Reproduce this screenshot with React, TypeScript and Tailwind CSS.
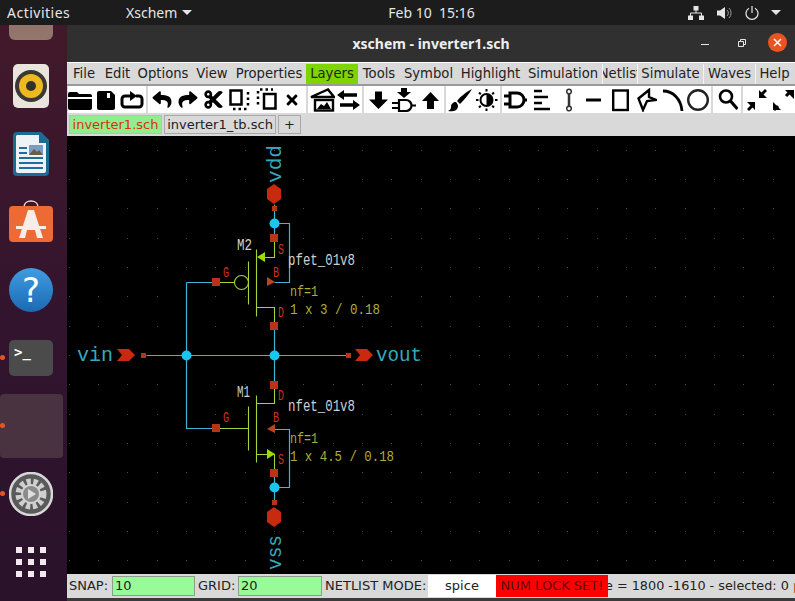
import * as React from 'react';
import { FaCut, FaReply, FaShare, FaTimes } from 'react-icons/fa';

const menus = [
    { label: 'File', w: 'w-[34px]' },
    { label: 'Edit', w: 'w-[33px]' },
    { label: 'Options', w: 'w-[58px]' },
    { label: 'View', w: 'w-[40px]' },
    { label: 'Properties', w: 'w-[74px]' },
    { label: 'Layers', w: 'w-[52px]', active: true },
    { label: 'Tools', w: 'w-[42px]' },
    { label: 'Symbol', w: 'w-[57px]' },
    { label: 'Highlight', w: 'w-[67px]' },
    { label: 'Simulation', w: 'w-[78px]' },
    { label: 'Netlist', w: 'w-[35px]', raised: true },
    { label: 'Simulate', w: 'w-[66px]', raised: true },
    { label: 'Waves', w: 'w-[52px]', raised: true },
    { label: 'Help', w: 'w-[38px]', raised: true },
];

const Ic: React.FunctionComponent<{ w: number; className?: string; children: React.ReactNode }> = ({ w, className, children }) => (
    <svg width={w} height={24} viewBox={`0 0 ${w} 24`} className={`shrink-0 ${className || ''}`}>
        {children}
    </svg>
);

const Group: React.FunctionComponent<{ className: string; children: React.ReactNode }> = ({ className, children }) => (
    <div className={`flex items-center bg-white overflow-hidden ${className}`}>{children}</div>
);

const Toolbar = () => (
    <div className="flex h-[27px] shrink-0 gap-[2px] pl-[1px] bg-[#d9d9d9]">
        <Group className="w-[78px]">
            <Ic w={24}>
                <path d="M0 6a2 2 0 0 1 2-2h7l2 2h11a2 2 0 0 1 2 2v1H0zM0 11h24v9a2 2 0 0 1-2 2H2a2 2 0 0 1-2-2z" />
            </Ic>
            <Ic w={20} className="ml-[4px]">
                <path d="M3 3h12l4 4v13a2 2 0 0 1-2 2H3a2 2 0 0 1-2-2V5a2 2 0 0 1 2-2z" />
                <rect x="11" y="5" width="3" height="5" fill="#fff" />
            </Ic>
            <Ic w={24} className="ml-[4px]">
                <path d="M10 8H5a3 3 0 0 0-3 3v5a3 3 0 0 0 3 3h14a3 3 0 0 0 3-3v-5a3 3 0 0 0-3-3h-3" fill="none" stroke="#000" strokeWidth="3" />
                <path d="M10 3l7 5-7 5z" />
            </Ic>
        </Group>
        <Group className="w-[158px]">
            <FaReply className="ml-[3px] w-[22px] h-[19px] shrink-0" />
            <FaShare className="ml-[4px] w-[22px] h-[19px] shrink-0" />
            <FaCut className="ml-[4px] w-[21px] h-[21px] shrink-0" />
            <Ic w={21} className="ml-[5px]">
                <rect x="1.500" y="2.500" width="11" height="14" fill="none" stroke="#000" strokeWidth="2.500" />
                <path d="M19 4v14M4 21h14" fill="none" stroke="#000" strokeWidth="2.500" strokeDasharray="2.500 3" />
            </Ic>
            <Ic w={21} className="ml-[6px]">
                <rect x="8" y="6" width="11.500" height="14.500" fill="none" stroke="#000" strokeWidth="2.500" />
                <path d="M2 3v14M4 1.500h13" fill="none" stroke="#000" strokeWidth="2.500" strokeDasharray="2.500 3" />
            </Ic>
            <FaTimes className="ml-[8px] w-[14px] h-[16px] shrink-0" />
        </Group>
        <Group className="w-[54px]">
            <Ic w={25} className="ml-[2px]">
                <path d="M1 9L18 1.500 24 9z" fill="none" stroke="#000" strokeWidth="2.400" />
                <rect x="5" y="12" width="18" height="10.500" fill="none" stroke="#000" strokeWidth="2.400" />
                <path d="M7 21l4-5 3 2 3-4 4 7z" />
            </Ic>
            <Ic w={23} className="ml-[2px]">
                <path d="M7 7h13M3 17h13" fill="none" stroke="#000" strokeWidth="3.500" />
                <path d="M0 7l7-5v10zM23 17l-7-5v10z" />
            </Ic>
        </Group>
        <Group className="w-[80px]">
            <Ic w={19} className="ml-[5px]">
                <path d="M6 3.500h7v8h6l-9.500 9.500L0 11.500h6z" />
            </Ic>
            <Ic w={24} className="ml-[4px]">
                <path d="M9 0h6v4h4l-7 6-7-6h4z" />
                <path d="M7 12h7a5.500 5.500 0 0 1 0 11H7zM0 15h7M0 20h7M19 17.500h5" fill="none" stroke="#000" strokeWidth="2.200" />
            </Ic>
            <Ic w={19} className="ml-[5px]">
                <path d="M9.500 4l8.500 9h-5v8H6v-8H1z" />
            </Ic>
        </Group>
        <Group className="w-[54px]">
            <Ic w={24} className="ml-[2px]">
                <path d="M24 1C18 4 12 9 9 13l3 3C16 12 21 6 24 1zM8 14c-3 0-5 2-5 5 0 2-1 3-3 4 4 1 10 0 10-5 0-1-1-3-2-4z" />
            </Ic>
            <Ic w={23} className="ml-[3px]">
                <circle cx="11.500" cy="12" r="6" fill="#fff" stroke="#000" strokeWidth="2" />
                <path d="M11.500 6a6 6 0 0 1 0 12z" />
                <path d="M11.500 1v2.500M11.500 20.500V23M1 12h2.500M20 12h2.500M4 4.500l1.800 1.800M19 4.500l-1.800 1.800M4 19.500l1.800-1.800M19 19.500l-1.800-1.800" stroke="#000" strokeWidth="2" />
            </Ic>
        </Group>
        <Group className="w-[209px]">
            <Ic w={23} className="ml-[2px]">
                <path d="M6 5h7a7 7 0 0 1 0 14H6zM0 8h6M0 16h6M19 12h4" fill="none" stroke="#000" strokeWidth="3" />
            </Ic>
            <Ic w={17} className="ml-[7px]">
                <path d="M0 3h8M0 9h14M0 15h8M0 21h16" stroke="#000" strokeWidth="2.500" />
            </Ic>
            <Ic w={8} className="ml-[14px]">
                <path d="M4 5v14" stroke="#333" strokeWidth="2.500" />
                <circle cx="4" cy="3.500" r="2.300" fill="#fff" stroke="#333" strokeWidth="1.500" />
                <circle cx="4" cy="20.500" r="2.300" fill="#fff" stroke="#333" strokeWidth="1.500" />
            </Ic>
            <Ic w={15} className="ml-[13px]">
                <path d="M0 12h15" stroke="#000" strokeWidth="3" />
            </Ic>
            <Ic w={17} className="ml-[11px]">
                <rect x="1.200" y="2.500" width="14.600" height="19.500" fill="none" stroke="#000" strokeWidth="2.400" />
            </Ic>
            <Ic w={20} className="ml-[8px]">
                <path d="M12 2L1.500 10.500 6 22l4-9 9-1-7-3z" fill="none" stroke="#000" strokeWidth="2.400" />
            </Ic>
            <Ic w={21} className="ml-[6px]">
                <path d="M0 3c10 0 18 8 19 20" fill="none" stroke="#000" strokeWidth="2.800" />
            </Ic>
            <Ic w={22} className="ml-[3px]">
                <circle cx="11" cy="12" r="9.800" fill="none" stroke="#222" strokeWidth="2.400" />
            </Ic>
        </Group>
        <Group className="w-[28px]">
            <Ic w={20} className="ml-[5px]">
                <circle cx="8" cy="8.500" r="6" fill="none" stroke="#000" strokeWidth="2.600" />
                <path d="M12.500 13l7 8" stroke="#000" strokeWidth="3.200" />
            </Ic>
        </Group>
        <Group className="flex-1">
            <Ic w={20} className="ml-[4px]">
                <path d="M19 2l-4 4" stroke="#000" strokeWidth="3" />
                <path d="M12 2v8h8zM1 22l4-4" />
                <path d="M1 22l4-4" stroke="#000" strokeWidth="3" />
                <path d="M0 14h8v8z" />
            </Ic>
            <Ic w={23} className="ml-[5px]">
                <path d="M14 8l5-5M2 22l4-4" stroke="#000" strokeWidth="3" />
                <path d="M13 2h9v9zM1 14l8 8H1z" />
            </Ic>
        </Group>
    </div>
);

// grid dots of the schematic sit every 29.33px, lined up on the wires
const gridDots: { x: number; y: number }[] = [];
for (let i = -7; i < 19; i++) {
    for (let j = -8; j < 9; j++) {
        gridDots.push({ x: Math.round(274 + i * 29.33), y: Math.round(355 + j * 29.33) });
    }
}

const WIRE = '#3fb4d6';
const DOT = '#18c6f0';
const SYM = '#a4d43a';
const PIN = '#b83418';
const RED = '#d2301c';
const mono = '"Liberation Mono", "DejaVu Sans Mono", monospace';

const pinLabels = [
    { t: 'S', x: 278, y: 254 },
    { t: 'G', x: 223, y: 277 },
    { t: 'B', x: 273, y: 277 },
    { t: 'D', x: 278, y: 317 },
    { t: 'D', x: 278, y: 400 },
    { t: 'G', x: 223, y: 422 },
    { t: 'B', x: 273, y: 422 },
    { t: 'S', x: 278, y: 464 },
];

const Schematic = () => (
    <svg viewBox="67 136 728 438" className="block w-full h-full">
        {gridDots.map((d) => (
            <rect key={`${d.x}-${d.y}`} x={d.x} y={d.y} width="1" height="1" fill="#4a4a4a" />
        ))}
        <g fill="none" stroke={WIRE} strokeWidth="1.200" transform="translate(.5 .5)">
            <path d="M274 204V238M274 223H289V282H274" />
            <path d="M274 326V385M146 355H348M186 282V428H216M186 282H216" />
            <path d="M274 429H289V487H274M274 473V502" />
        </g>
        <g fill="none" stroke={SYM} strokeWidth="1.100" transform="translate(.5 .5)">
            <path d="M274 238V257H258M256 249V316M248 261V304M256 307H274V326M216 282H234" />
            <circle cx="241" cy="282" r="7" />
            <path d="M274 385V403H256M256 395V462M248 406V450M216 428H248M256 454H274V473" />
        </g>
        <path d="M257 257l8-5v10z" fill="#9bdc00" />
        <path d="M275 454l-8-5v10z" fill="#9bdc00" />
        <path d="M275 282l-8-5v9z" fill="#b8451f" />
        <path d="M267 429l8-5v9z" fill="#b8451f" />
        {[
            [274, 223],
            [186, 355],
            [274, 355],
            [274, 487],
        ].map(([x, y]) => (
            <circle key={`${x}-${y}`} cx={x + 0.5} cy={y + 0.5} r="5" fill={DOT} />
        ))}
        <g fill={PIN}>
            {[
                [274, 238],
                [216, 282],
                [274, 326],
                [274, 385],
                [216, 428],
                [274, 473],
            ].map(([x, y]) => (
                <rect key={`${x}-${y}`} x={x - 4} y={y - 4} width="8" height="8" />
            ))}
            {[
                [274, 208],
                [143, 355],
                [348, 355],
                [274, 502],
            ].map(([x, y]) => (
                <rect key={`${x}-${y}`} x={x - 2} y={y - 2} width="5" height="5" />
            ))}
        </g>
        <g fill="#c8290f">
            <path d="M274 184l7 5v10l-7 5-7-5v-10z" />
            <path d="M274 507l7 5v10l-7 5-7-5v-10z" />
            <path d="M117 349h12l6 6-6 6h-12l5-6z" />
            <path d="M355 349h12l6 6-6 6h-12l5-6z" />
        </g>
        <g fontFamily={mono} fill="#35a9bd" fontSize="21">
            <text x="77" y="361" textLength="36" lengthAdjust="spacingAndGlyphs">vin</text>
            <text x="376" y="361" textLength="46" lengthAdjust="spacingAndGlyphs">vout</text>
            <text transform="translate(281 183) rotate(-90)" textLength="38" lengthAdjust="spacingAndGlyphs">vdd</text>
            <text transform="translate(281 570) rotate(-90)" textLength="35" lengthAdjust="spacingAndGlyphs">vss</text>
        </g>
        <g fontFamily={mono} fill="#cfcfcf" fontSize="16">
            <text x="237" y="250" textLength="15" lengthAdjust="spacingAndGlyphs">M2</text>
            <text x="237" y="397" textLength="13" lengthAdjust="spacingAndGlyphs">M1</text>
            <text x="288" y="265" textLength="67" lengthAdjust="spacingAndGlyphs">pfet_01v8</text>
            <text x="288" y="411" textLength="67" lengthAdjust="spacingAndGlyphs">nfet_01v8</text>
        </g>
        <g fontFamily={mono} fill="#adad3c" fontSize="15">
            <text x="290" y="296" textLength="28" lengthAdjust="spacingAndGlyphs">nf=1</text>
            <text x="290" y="314" textLength="90" lengthAdjust="spacingAndGlyphs">1 x 3 / 0.18</text>
            <text x="290" y="443" textLength="28" lengthAdjust="spacingAndGlyphs">nf=1</text>
            <text x="290" y="461" textLength="104" lengthAdjust="spacingAndGlyphs">1 x 4.5 / 0.18</text>
        </g>
        <g fontFamily={mono} fill={RED} fontSize="15">
            {pinLabels.map((p) => (
                <text key={`${p.t}-${p.y}`} x={p.x} y={p.y} textLength="6" lengthAdjust="spacingAndGlyphs">
                    {p.t}
                </text>
            ))}
        </g>
    </svg>
);

const DockItem: React.FunctionComponent<{ dot?: boolean; active?: boolean; children?: React.ReactNode }> = ({ dot, active, children }) => (
    <div className="relative flex items-center justify-center w-[62px] h-[68px] shrink-0">
        {active && <div className="w-[63px] h-[64px] shrink-0 rounded-[4px] bg-[#4a3340]" />}
        {children}
        {dot && <div className="absolute left-0 top-[31px] w-[5px] h-[5px] rounded-full bg-[#e95420]" />}
    </div>
);

const Dock = () => (
    <div className="w-[67px] shrink-0 overflow-hidden bg-gradient-to-b from-[#42192a] via-[#33142e] to-[#29122a]">
        <div className="-mt-[41px]">
            <DockItem>
                <div className="w-[44px] h-[44px] rounded-[6px] bg-gradient-to-b from-[#8d6e66] to-[#94766c]" />
            </DockItem>
            <DockItem>
                <svg width="36" height="44" viewBox="0 0 36 44">
                    <rect width="36" height="44" rx="5" fill="#e9e5dc" />
                    <circle cx="18" cy="22" r="16" fill="#3a3836" />
                    <circle cx="18" cy="22" r="12" fill="#eeb91e" />
                    <circle cx="18" cy="22" r="5" fill="#33312f" />
                </svg>
            </DockItem>
            <DockItem>
                <svg width="36" height="44" viewBox="0 0 36 44">
                    <path d="M4 0h24l8 8v32a4 4 0 0 1-4 4H4a4 4 0 0 1-4-4V4a4 4 0 0 1 4-4z" fill="#1b6c92" />
                    <path d="M4 3h22v8h7v28a2 2 0 0 1-2 2H5a2 2 0 0 1-2-2V4z" fill="#eef2f6" />
                    <path d="M6 15h8v2H6zM6 20h8v2H6zM6 25h24v2H6zM6 30h24v2H6zM6 35h24v2H6z" fill="#1d6f96" />
                    <rect x="16" y="13" width="14" height="10" fill="#7a9cc0" />
                    <path d="M16 23l5-6 3 3 2-2 4 5z" fill="#6b5a45" />
                </svg>
            </DockItem>
            <DockItem>
                <svg width="44" height="44" viewBox="0 0 44 44">
                    <path d="M15 7c0-8 14-8 14 0" fill="none" stroke="#f0d8cc" strokeWidth="1.500" />
                    <rect y="6" width="44" height="36" rx="4" fill="#ee6a34" />
                    <path d="M19 10h6l9 28h-6l-2-8h-8l-2 8h-6z" fill="#f8ede6" />
                    <path d="M7 26h30v3H7z" fill="#f8ede6" />
                </svg>
            </DockItem>
            <DockItem>
                <div className="flex items-center justify-center w-[44px] h-[44px] rounded-full bg-gradient-to-b from-[#3f9de0] to-[#1c69b4] text-[34px] leading-none text-white font-['DejaVu_Sans',sans-serif]">
                    ?
                </div>
            </DockItem>
            <DockItem dot>
                <div className="w-[44px] h-[36px] rounded-[5px] bg-[#4b4b4b] pl-[5px] pt-[3px] text-[14px] leading-[18px] font-bold text-white font-['DejaVu_Sans_Mono',monospace]">
                    &gt;_
                </div>
            </DockItem>
            <DockItem dot active />
            <DockItem dot>
                <svg width="44" height="44" viewBox="0 0 44 44">
                    <circle cx="22" cy="22" r="21" fill="#5a5a5a" stroke="#d8d8d8" strokeWidth="2.500" />
                    <circle cx="22" cy="22" r="12" fill="none" stroke="#cfcfcf" strokeWidth="7" strokeDasharray="4 2.500" />
                    <circle cx="22" cy="22" r="10" fill="#d4d4d4" />
                    <circle cx="22" cy="22" r="8" fill="#8b8b8b" />
                    <path d="M19 17l8 5-8 5z" fill="#dedede" />
                </svg>
            </DockItem>
            <DockItem>
                <div className="grid grid-cols-3 gap-[6px]">
                    {Array.from({ length: 9 }).map((_, i) => (
                        <div key={i} className="w-[6px] h-[6px] bg-[#f2e8ee]" />
                    ))}
                </div>
            </DockItem>
        </div>
    </div>
);

const TopBar = () => (
    <div className="flex items-center h-[25px] shrink-0 bg-[#1c1c1c] text-[14px] text-[#e6e6e6] font-['Noto_Sans',sans-serif]">
        <span className="ml-[7px] w-[119px] tracking-[0.5px]">Activities</span>
        <span>Xschem</span>
        <div className="ml-[5px] w-0 h-0 border-x-[5px] border-x-transparent border-t-[5px] border-t-[#e6e6e6]" />
        <span className="ml-[196px] w-[300px] whitespace-pre">Feb 10  15:16</span>
        <svg width="16" height="14" viewBox="0 0 16 14" fill="#e6e6e6">
            <path d="M5.500 0h5v4.500h-5zM0 9.500h5V14H0zM11 9.500h5V14h-5z" />
            <path d="M8 4v3M2.500 10V7h11v3" fill="none" stroke="#e6e6e6" />
        </svg>
        <svg width="15" height="14" viewBox="0 0 15 14" fill="#e6e6e6" className="ml-[13px]">
            <path d="M0 4.500h3L8 1v12L3 9.500H0z" />
            <path d="M10 4a4 4 0 0 1 0 6M12 2a7 7 0 0 1 0 10" fill="none" stroke="#999" />
        </svg>
        <svg width="14" height="14" viewBox="0 0 14 14" fill="none" stroke="#e6e6e6" strokeWidth="1.200" className="ml-[13px]">
            <path d="M4 2.200a6 6 0 1 0 6 0M7 0v7" />
        </svg>
        <div className="ml-[12px] w-0 h-0 border-x-[5px] border-x-transparent border-t-[5px] border-t-[#e6e6e6]" />
    </div>
);

const TitleBar = () => (
    <div className="relative flex items-center justify-center h-[37px] shrink-0 bg-[#303030] text-[14px] font-bold text-[#eeeeee] font-['Noto_Sans',sans-serif]">
        xschem - inverter1.sch
        <div className="absolute right-[8px] top-[8px] flex items-center">
            <div className="w-[8px] h-[1px] mt-[3px] bg-[#e6e6e6]" />
            <svg width="8" height="8" viewBox="0 0 8 8" fill="none" stroke="#e6e6e6" className="ml-[29px]">
                <path d="M.5 2.500h5v5h-5zM2.500 2V.5h5v5H6" />
            </svg>
            <div className="ml-[22px] flex items-center justify-center w-[19px] h-[19px] rounded-full bg-[#e95420]">
                <svg width="9" height="9" viewBox="0 0 9 9" stroke="#fff" strokeWidth="1.500">
                    <path d="M1 1l7 7M8 1L1 8" />
                </svg>
            </div>
        </div>
    </div>
);

const MenuBar = () => (
    <div className="flex h-[24px] shrink-0 pt-[1px] border-t border-t-white border-b-2 border-b-[#9a9a9a] bg-[#d9d9d9] text-[13.200px] text-[#222222] font-['DejaVu_Sans',sans-serif]">
        {menus.map((m) => (
            <div
                key={m.label}
                className={`flex shrink-0 items-center justify-center overflow-hidden whitespace-nowrap ${m.w} ${m.active ? 'bg-[#7fd400]' : ''} ${m.raised ? 'border-l border-l-[#f4f4f4]' : ''}`}
            >
                <span className="shrink-0">{m.label}</span>
            </div>
        ))}
    </div>
);

const Tabs = () => (
    <div className="flex h-[23px] shrink-0 gap-[2px] pt-[2px] pb-[2px] pl-[2px] bg-[#d9d9d9] text-[13px] font-['DejaVu_Sans',sans-serif]">
        <div className="flex items-center justify-center w-[93px] border border-[#bcbcbc] bg-[#90ee90] text-[#d9300c]">inverter1.sch</div>
        <div className="flex items-center justify-center w-[112px] border border-[#a8a8a8] text-[#222222]">inverter1_tb.sch</div>
        <div className="flex items-center justify-center w-[23px] border border-[#a8a8a8] text-[#222222]">+</div>
    </div>
);

const StatusBar = () => (
    <div className="flex items-center h-[24px] shrink-0 overflow-hidden whitespace-nowrap bg-[#d9d9d9] text-[13px] text-[#222222] font-['DejaVu_Sans',sans-serif]">
        <span className="ml-[2px] w-[43px] shrink-0">SNAP:</span>
        <div className="flex shrink-0 items-center w-[83px] h-[20px] pl-[2px] border border-[#8a9f8a] bg-[#98fb98]">10</div>
        <span className="ml-[3px] w-[40px] shrink-0">GRID:</span>
        <div className="flex shrink-0 items-center w-[84px] h-[20px] pl-[2px] border border-[#8a9f8a] bg-[#98fb98]">20</div>
        <span className="ml-[3px] w-[103px] shrink-0">NETLIST MODE:</span>
        <div className="flex shrink-0 items-center justify-center w-[68px] h-[22px] bg-white">spice</div>
        <div className="relative z-10 flex shrink-0 items-center justify-center w-[112px] h-[22px] bg-[#ff0000] text-[#5a0a0a]">NUM LOCK SET!</div>
        <span className="shrink-0 -ml-[3px] text-[12.800px]">
            e = 1800 -1610 - selected: 0 <span className="text-[#a85a10]">p</span>
        </span>
    </div>
);

const App = () => (
    <div className="flex flex-col w-[795px] h-[601px] overflow-hidden bg-black">
        <TopBar />
        <div className="flex flex-1 min-h-0">
            <Dock />
            <div className="flex flex-col flex-1 min-w-0">
                <TitleBar />
                <MenuBar />
                <Toolbar />
                <Tabs />
                <div className="flex-1 min-h-0 bg-black">
                    <Schematic />
                </div>
                <StatusBar />
                <div className="h-[3px] shrink-0 bg-[#3a3a3a]" />
            </div>
        </div>
    </div>
);

export default App;
